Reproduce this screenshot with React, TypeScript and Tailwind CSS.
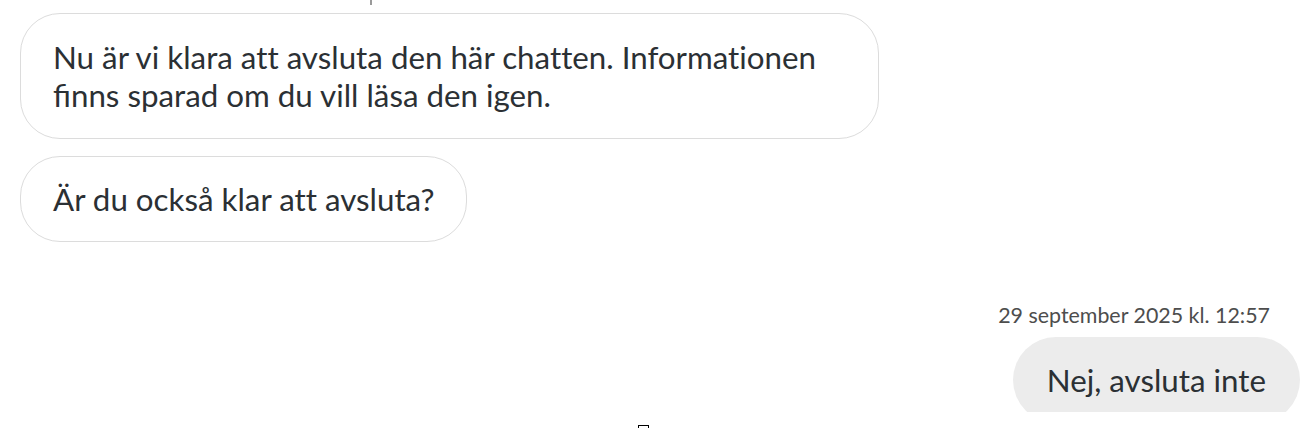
export default function App() {
  return (
    <div className="w-[1306px] h-[428px] overflow-hidden bg-white font-['Lato','Liberation_Sans',sans-serif] text-[#2b3034] [font-variant-ligatures:none]">
      <div className="h-[412px] overflow-hidden relative">
        <div className="absolute left-[370px] top-0 w-[2px] h-[5px] bg-[#9a9a9a]" />
        <div className="flex flex-col items-start pl-5 pr-[6px] pt-[13px]">
          <div className="max-w-[859px] rounded-[40px] border border-[#dcdcdc] bg-white px-8 py-6 text-[31.3px] leading-[38px]">
            Nu är vi klara att avsluta den här chatten. Informationen{' '}
            <span className="[font-variant-ligatures:common-ligatures]">finns</span> sparad om du vill läsa den igen.
          </div>
          <div className="mt-[17px] rounded-[40px] border border-[#dcdcdc] bg-white px-8 py-[23px] text-[31.3px] leading-[38px]">
            Är du också klar att avsluta?
          </div>
          <div className="mt-[61px] self-stretch flex flex-col items-end">
            <div className="pr-[30px] text-[21.4px] leading-[24px] text-[#4d4d4d]">29 september 2025 kl. 12:57</div>
            <div className="mt-[10px] rounded-full bg-[#ececec] px-[34px] py-6 text-[31.3px] leading-[38px]">
              Nej, avsluta inte
            </div>
          </div>
        </div>
      </div>
      <div className="h-[16px] pl-[638px] pt-[13px]">
        <div className="w-[11px] h-[14px] border border-black" />
      </div>
    </div>
  )
}
